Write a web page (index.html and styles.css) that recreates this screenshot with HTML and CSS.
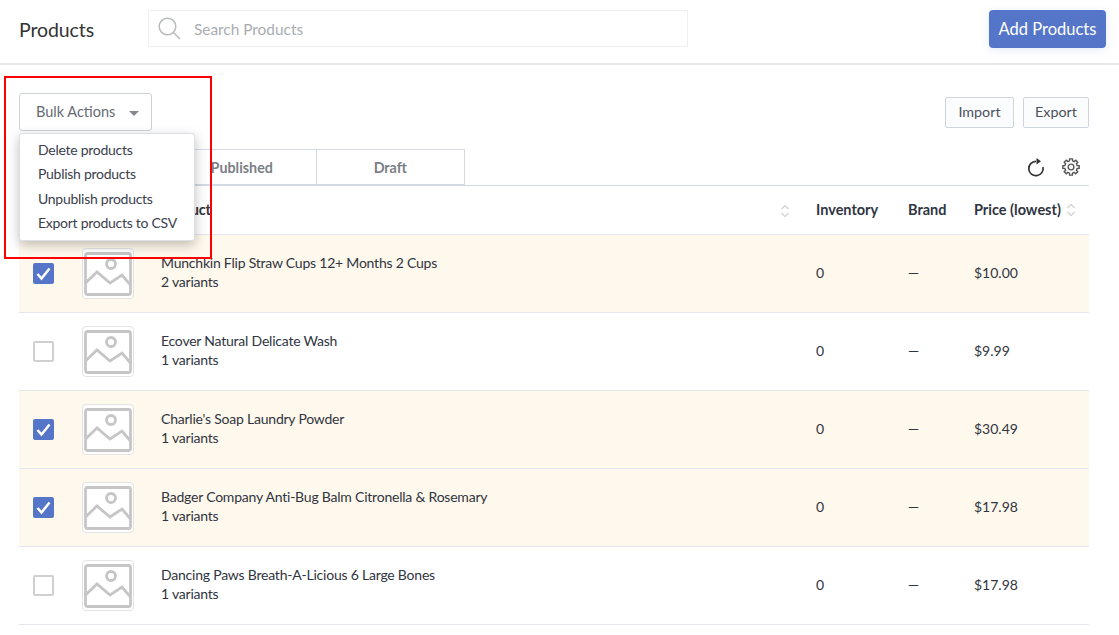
FILE: index.html
```html
<!DOCTYPE html>
<html lang="en">

<head>
    <meta charset="UTF-8">
    <title>Products</title>
    <link rel="stylesheet" href="styles.css">
</head>

<body>

    <header class="topbar">
        <h1 class="page-title">Products</h1>
        <div class="search-box">
            <svg class="search-icon" width="24" height="24" viewBox="0 0 24 24">
                <circle cx="9.500" cy="9.500" r="8.300" />
                <line x1="15.500" y1="15.500" x2="22" y2="22" />
            </svg>
            <span class="search-text">Search Products</span>
        </div>
        <button class="btn-add">Add Products</button>
    </header>

    <main class="content">
        <div class="actions-row">
            <div class="bulk-wrap">
                <button class="btn-bulk">Bulk Actions <span class="caret"></span></button>
                <ul class="bulk-menu">
                    <li>Delete products</li>
                    <li>Publish products</li>
                    <li>Unpublish products</li>
                    <li>Export products to CSV</li>
                </ul>
            </div>
            <div class="actions-right">
                <button class="btn-small">Import</button>
                <button class="btn-small">Export</button>
            </div>
        </div>

        <div class="tabs-row">
            <div class="tab tab-active"></div>
            <div class="tab">Published</div>
            <div class="tab">Draft</div>
            <div class="tools">
                <svg class="tool-refresh" width="18" height="20" viewBox="0 0 18 20">
                    <path d="M16 10 A7.200 7.200 0 1 1 9 4.300" />
                    <path class="solid" d="M9.500 1 L14 4.300 L9.500 7.500 Z" />
                </svg>
                <svg class="tool-gear" width="18" height="18" viewBox="0 0 18 18">
                    <circle cx="9" cy="9" r="2.900" />
                    <path d="M7.560 .83 L10.440 .83 L10.520 2.890 L12.240 3.600 L13.760 2.200 L15.800 4.240 L14.400 5.760 L15.110 7.480 L17.170 7.560 L17.170 10.440 L15.110 10.520 L14.400 12.240 L15.800 13.760 L13.760 15.800 L12.240 14.400 L10.520 15.110 L10.440 17.170 L7.560 17.170 L7.480 15.110 L5.760 14.400 L4.240 15.800 L2.200 13.760 L3.600 12.240 L2.890 10.520 L.83 10.440 L.83 7.560 L2.890 7.480 L3.600 5.760 L2.200 4.240 L4.240 2.200 L5.760 3.600 L7.480 2.890 Z" />
                </svg>
            </div>
        </div>

        <div class="table-head">
            <div class="col-check"></div>
            <div class="col-thumb"></div>
            <div class="col-name">Product
                <svg class="sort" width="10" height="14" viewBox="0 0 10 14"><path d="M1.500 5 L5 1.500 L8.500 5 M1.500 9 L5 12.500 L8.500 9" /></svg>
            </div>
            <div class="col-inv">Inventory</div>
            <div class="col-brand">Brand</div>
            <div class="col-price">Price (lowest)
                <svg class="sort" width="10" height="14" viewBox="0 0 10 14"><path d="M1.500 5 L5 1.500 L8.500 5 M1.500 9 L5 12.500 L8.500 9" /></svg>
            </div>
        </div>

        <div id="rows"></div>
    </main>

    <div class="red-box"></div>

    <script>
        const products = [
            { name: "Munchkin Flip Straw Cups 12+ Months 2 Cups", variants: "2 variants", price: "$10.00", checked: true },
            { name: "Ecover Natural Delicate Wash", variants: "1 variants", price: "$9.99", checked: false },
            { name: "Charlie's Soap Laundry Powder", variants: "1 variants", price: "$30.49", checked: true },
            { name: "Badger Company Anti-Bug Balm Citronella & Rosemary", variants: "1 variants", price: "$17.98", checked: true },
            { name: "Dancing Paws Breath-A-Licious 6 Large Bones", variants: "1 variants", price: "$17.98", checked: false }
        ];

        const picture = `<svg width="49" height="49" viewBox="0 0 49 49">
            <rect x="1.500" y="4.500" width="45" height="41" rx="2" />
            <circle cx="27" cy="15" r="4.500" />
            <path d="M1.500 34 L13 23 L26 34 L38 26 L46.500 36" />
        </svg>`;

        const tick = `<svg width="21" height="21" viewBox="0 0 21 21"><path d="M4.500 11 L8.500 15.500 L16.500 5.500" /></svg>`;

        document.querySelector("#rows").innerHTML = products.map(p => `
            <div class="row ${p.checked ? "row-checked" : ""}">
                <div class="col-check"><span class="checkbox">${p.checked ? tick : ""}</span></div>
                <div class="col-thumb"><span class="thumb">${picture}</span></div>
                <div class="col-name">
                    <div>${p.name.replace("&", "&amp;")}</div>
                    <div>${p.variants}</div>
                </div>
                <div class="col-inv">0</div>
                <div class="col-brand">—</div>
                <div class="col-price">${p.price}</div>
            </div>`).join("");
    </script>
</body>

</html>
```

FILE: styles.css
```css
* {
    box-sizing: border-box;
}

body {
    margin: 0;
    font-family: Lato, "Liberation Sans", sans-serif;
    font-size: 14px;
    color: #2f3541;
    background: #fff;
    overflow: hidden;
}

button {
    font-family: Lato, sans-serif;
    cursor: pointer;
}

.topbar {
    display: flex;
    align-items: center;
    height: 65px;
    padding: 0 13px 5px 19px;
    border-bottom: 2px solid #e4e6ea;
}

.page-title {
    width: 129px;
    margin: 0;
    font-size: 19.500px;
    font-weight: 400;
    letter-spacing: -0.100px;
    color: #333;
}

.search-box {
    display: flex;
    align-items: center;
    width: 540px;
    height: 37px;
    margin-top: -1px;
    padding-left: 9px;
    border: 1px solid #eff0f2;
}

.search-icon {
    margin-right: 12px;
    fill: none;
    stroke: #b9bbbd;
    stroke-width: 1.500;
}

.search-text {
    font-size: 15.400px;
    color: #a9adb1;
}

.btn-add {
    width: 117px;
    height: 38px;
    margin-left: auto;
    padding: 0;
    border: 0;
    border-radius: 4px;
    background: #5576c8;
    color: #fff;
    font-size: 16.500px;
    box-shadow: 0 2px 8px rgba(85, 118, 200, 0.15);
}

.content {
    padding: 28px 30px 0 19px;
}

.actions-row {
    display: flex;
    justify-content: space-between;
    height: 56px;
}

.bulk-wrap {
    position: relative;
}

.btn-bulk {
    width: 133px;
    height: 38px;
    padding: 0 0 2px 16px;
    text-align: left;
    border: 1px solid #cdd2d9;
    border-radius: 3px;
    background: #fff;
    color: #666b73;
    font-size: 14.500px;
}

.caret {
    display: inline-block;
    margin-left: 10px;
    vertical-align: 1px;
    border-top: 5px solid #85888d;
    border-left: 5px solid transparent;
    border-right: 5px solid transparent;
}

.bulk-menu {
    position: absolute;
    z-index: 5;
    top: 40px;
    left: 0;
    width: 176px;
    height: 108px;
    margin: 0;
    padding: 4px 0 0 18px;
    list-style: none;
    background: #fff;
    border: 1px solid #dcdfe4;
    border-radius: 3px;
    box-shadow: 0 4px 12px rgba(0, 0, 0, 0.25);
    font-size: 14px;
    letter-spacing: -0.270px;
    color: #3a404c;
}

.bulk-menu li {
    height: 24.400px;
    line-height: 24px;
}

.actions-right {
    display: flex;
    gap: 9px;
    padding-top: 4px;
}

.btn-small {
    width: 69px;
    height: 31px;
    padding: 0 0 2px;
    border: 1px solid #cdd4de;
    border-radius: 2px;
    background: #fbfcfd;
    color: #4a505c;
    font-size: 14.300px;
}

.btn-small:last-child {
    width: 66px;
}

.tabs-row {
    display: flex;
    height: 37px;
    border-bottom: 1px solid #d3dae6;
}

.tab {
    width: 148.500px;
    height: 36px;
    line-height: 36px;
    text-align: center;
    font-size: 14.300px;
    font-weight: 700;
    color: #7b7f85;
    border: 1px solid #d3dae6;
    border-left: 0;
}

.tab-active {
    width: 149px;
    border-left: 1px solid #5576c8;
}

.tools {
    display: flex;
    align-items: center;
    gap: 17px;
    margin-left: auto;
    padding: 0 9px 1px 0;
}

.tools svg {
    fill: none;
    stroke-width: 1.700;
}

.tool-refresh {
    stroke: #333;
}

.tool-refresh .solid {
    fill: #333;
    stroke: none;
}

.tool-gear {
    stroke: #555;
}

.tools .tool-gear {
    stroke-width: 1.400;
}

.table-head,
.row {
    display: flex;
    align-items: center;
    border-bottom: 1px solid #e3e6ee;
}

.table-head {
    height: 49px;
    padding-bottom: 1px;
    font-weight: 700;
    font-size: 14.500px;
    color: #2f3541;
}

.row {
    height: 78px;
    font-size: 14px;
}

.row-checked {
    background: #fff8ec;
}

.col-check {
    width: 63px;
    padding-left: 14px;
}

.col-thumb {
    width: 79px;
}

.col-name {
    display: flex;
    flex-direction: column;
    gap: 3px;
    position: relative;
    width: 655px;
    padding-right: 20px;
    line-height: 16px;
    letter-spacing: -0.220px;
}

.row .col-name,
.row .col-inv,
.row .col-brand,
.row .col-price {
    padding-bottom: 2px;
}

.table-head .col-name {
    display: block;
}

.table-head .sort {
    position: absolute;
    top: 2px;
    right: 26px;
}

.col-inv {
    width: 92px;
}

.col-brand {
    width: 66px;
}

.col-price {
    position: relative;
    flex: 1;
}

.table-head .col-price .sort {
    right: 13px;
}

.sort {
    fill: none;
    stroke: #d4d6d9;
    stroke-width: 1.500;
}

.checkbox {
    display: block;
    width: 21px;
    height: 21px;
    border: 2px solid #cfd0d2;
    border-radius: 2px;
}

.row-checked .checkbox {
    background: #5576c8;
    border: 0;
}

.checkbox svg {
    display: block;
    fill: none;
    stroke: #fff;
    stroke-width: 2.500;
}

.thumb {
    display: flex;
    align-items: center;
    justify-content: center;
    width: 52px;
    height: 51px;
    border: 1px solid #e3e3e3;
    border-radius: 4px;
    background: #fff;
}

.thumb svg {
    fill: none;
    stroke: #c6c6c6;
    stroke-width: 2.800;
}

.red-box {
    position: absolute;
    z-index: 10;
    left: 4px;
    top: 76px;
    width: 208px;
    height: 183px;
    border: 2px solid #f00;
}
```
